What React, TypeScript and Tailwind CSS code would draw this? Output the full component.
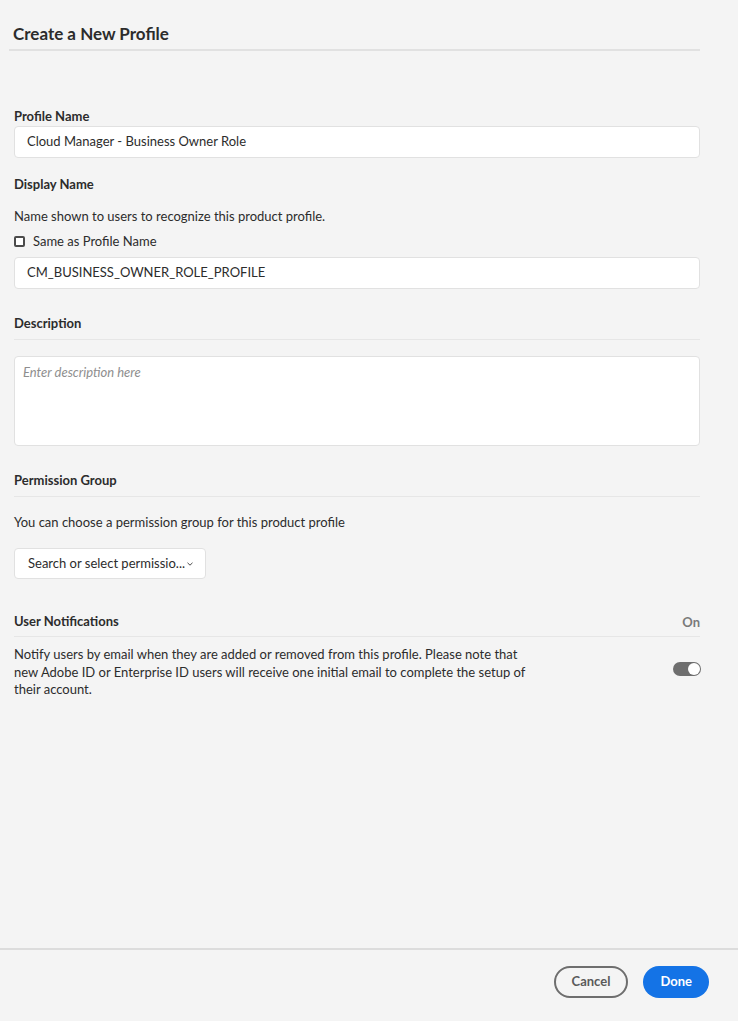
export default function App() {
  return (
    <div
      className="flex flex-col h-[1021px] w-[738px] bg-[#f4f4f4] text-[#2c2c2c]"
      style={{ fontFamily: 'Lato, "Noto Sans", sans-serif' }}
    >
      <div className="flex-1 pl-[14px] pr-[38px]">
        {/* Header */}
        <div className="pt-[24px] -ml-[5px] border-b-2 border-[#e1e1e1] pb-[5px] pl-[4px]">
          <h1 className="text-[17px] font-bold leading-[20px]">Create a New Profile</h1>
        </div>

        {/* Profile Name */}
        <div className="mt-[57px]">
          <label className="block text-[13px] font-bold leading-[16px]">Profile Name</label>
          <div className="mt-[2px] h-[32px] bg-white border border-[#e1e1e1] rounded-[4px] flex items-center px-[12px] text-[13px]">
            Cloud Manager - Business Owner Role
          </div>
        </div>

        {/* Display Name */}
        <div className="mt-[18px]">
          <label className="block text-[13px] font-bold leading-[16px]">Display Name</label>
          <p className="mt-[16px] text-[13px] leading-[16px]">Name shown to users to recognize this product profile.</p>
          <div className="mt-[9px] flex items-center gap-[8px] text-[13px] leading-[16px]">
            <span className="w-[11px] h-[11px] border-2 border-[#4b4b4b] rounded-[2px] bg-white" />
            <span>Same as Profile Name</span>
          </div>
          <div className="mt-[8px] h-[32px] bg-white border border-[#e1e1e1] rounded-[4px] flex items-center px-[12px] text-[13px]">
            CM_BUSINESS_OWNER_ROLE_PROFILE
          </div>
        </div>

        {/* Description */}
        <div className="mt-[26px]">
          <div className="border-b border-[#e6e6e6] pb-[8px]">
            <label className="block text-[13px] font-bold leading-[16px]">Description</label>
          </div>
          <div className="mt-[16px] h-[90px] bg-white border border-[#e1e1e1] rounded-[4px] px-[8px] py-[6px] text-[13px] italic text-[#8e8e8e]">
            Enter description here
          </div>
        </div>

        {/* Permission Group */}
        <div className="mt-[26px]">
          <div className="border-b border-[#e6e6e6] pb-[8px]">
            <label className="block text-[13px] font-bold leading-[16px]">Permission Group</label>
          </div>
          <p className="mt-[17px] text-[13px] leading-[16px]">You can choose a permission group for this product profile</p>
          <div className="mt-[18px] w-[192px] h-[31px] bg-white border border-[#e1e1e1] rounded-[4px] flex items-center pl-[13px] text-[13px]">
            <span>Search or select permissio...</span>
            <svg width="8" height="8" viewBox="0 0 8 8" className="ml-[1px] mt-[1px]">
              <path d="M1.5 2.8 L4 5.2 L6.5 2.8" fill="none" stroke="#4b4b4b" strokeWidth="1" />
            </svg>
          </div>
        </div>

        {/* User Notifications */}
        <div className="mt-[33px]">
          <div className="flex items-center justify-between border-b border-[#e6e6e6] pb-[6px]">
            <label className="text-[13px] font-bold leading-[16px]">User Notifications</label>
            <span className="text-[13px] font-bold text-[#7a7a7a] leading-[16px] mt-[2px]">On</span>
          </div>
          <div className="mt-[9px] flex items-center justify-between">
            <p className="w-[520px] text-[13px] leading-[17.5px]">
              Notify users by email when they are added or removed from this profile. Please note that new Adobe ID or Enterprise ID users will receive one initial email to complete the setup of their account.
            </p>
            <span className="w-[28px] h-[14px] rounded-full bg-[#6e6e6e] flex items-center justify-end pr-[1px] mb-[6px] mr-[-1px]">
              <span className="w-[12px] h-[12px] rounded-full bg-white" />
            </span>
          </div>
        </div>
      </div>

      {/* Footer */}
      <div className="h-[73px] border-t-2 border-[#dcdcdc] flex items-start justify-end gap-[15px] pt-[16px] pr-[29px]">
        <button className="h-[32px] px-[16px] rounded-full border-2 border-[#6e6e6e] text-[13px] font-bold text-[#5a5a5a]">
          Cancel
        </button>
        <button className="h-[32px] px-[17px] rounded-full bg-[#1473e6] text-[13px] font-bold text-white">
          Done
        </button>
      </div>
    </div>
  )
}
